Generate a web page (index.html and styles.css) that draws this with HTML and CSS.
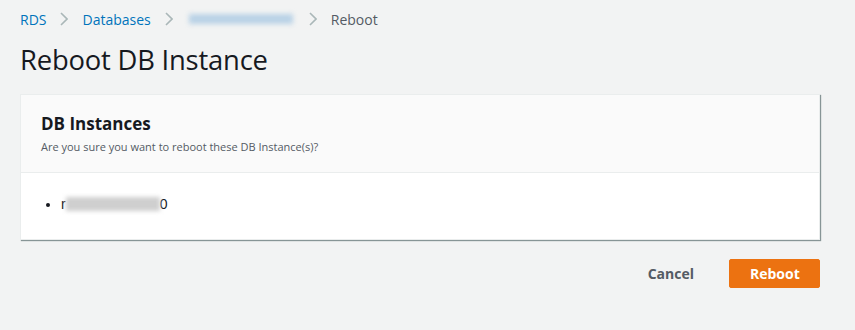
FILE: index.html
```html
<!doctype html>
<html>
<head>
  <meta charset="utf-8">
  <title>Reboot DB Instance</title>
  <link rel="stylesheet" href="styles.css">
</head>
<body>

  <nav class="crumbs">
    <a href="#">RDS</a>
    <span class="sep"><svg width="8" height="14" viewBox="0 0 8 14"><path d="M1 1l6 6-6 6" fill="none" stroke="#aab7b8" stroke-width="1.6"/></svg></span>
    <a href="#">Databases</a>
    <span class="sep"><svg width="8" height="14" viewBox="0 0 8 14"><path d="M1 1l6 6-6 6" fill="none" stroke="#aab7b8" stroke-width="1.6"/></svg></span>
    <a href="#" class="blurred" aria-label="instance"></a>
    <span class="sep"><svg width="8" height="14" viewBox="0 0 8 14"><path d="M1 1l6 6-6 6" fill="none" stroke="#aab7b8" stroke-width="1.6"/></svg></span>
    <span class="current">Reboot</span>
  </nav>

  <h1>Reboot DB Instance</h1>

  <div class="card">
    <div class="card-head">
      <h2>DB Instances</h2>
      <p>Are you sure you want to reboot these DB Instance(s)?</p>
    </div>
    <div class="card-body">
      <ul>
        <li>r<span class="mask"></span>0</li>
      </ul>
    </div>
  </div>

  <div class="actions">
    <button class="btn-link">Cancel</button>
    <button class="btn-primary">Reboot</button>
  </div>

</body>
</html>
```

FILE: styles.css
```css
body {
  margin: 0;
  padding: 0 35px 0 20px;
  background: #f2f3f3;
  font-family: "Open Sans", "Noto Sans", sans-serif;
  color: #16191f;
}

.crumbs {
  display: flex;
  align-items: center;
  height: 38px;
  font-size: 14px;
}

.crumbs a {
  color: #0073bb;
  text-decoration: none;
}

.crumbs .sep {
  display: flex;
  margin: 0 14px;
}

.crumbs .blurred {
  display: block;
  width: 104px;
  height: 10px;
  margin: 0 2px;
  background: #b9d2e6;
  filter: blur(2.5px);
}

.crumbs .current {
  color: #545b64;
}

h1 {
  margin: 1px 0 0;
  font-size: 27.4px;
  font-weight: 400;
  line-height: 42px;
  letter-spacing: -0.2px;
}

.card {
  margin-top: 13px;
  background: #fff;
  border: 1px solid #eaeded;
  box-shadow: 1px 1px 1px 0 #879596;
}

.card-head {
  background: #fafafa;
  border-bottom: 1px solid #eaeded;
  padding: 17px 20px 18px;
}

.card-head h2 {
  margin: 0;
  font-size: 17px;
  font-weight: 700;
  line-height: 24px;
}

.card-head p {
  margin: 3px 0 0;
  font-size: 11px;
  color: #545b64;
  line-height: 15px;
}

.card-body {
  padding: 20px 20px 24px;
}

.card-body ul {
  margin: 0;
  padding-left: 20px;
  font-family: "Liberation Sans", Arial, sans-serif;
  font-size: 14px;
  line-height: 22px;
}

.mask {
  display: inline-block;
  width: 94px;
  height: 14px;
  vertical-align: -2px;
  background: #cfcfcf;
  filter: blur(2px);
}

.actions {
  display: flex;
  justify-content: flex-end;
  align-items: center;
  margin-top: 19px;
  gap: 15px;
}

.actions button {
  font-family: "Open Sans", "Noto Sans", sans-serif;
  font-size: 14px;
  font-weight: 700;
  border-radius: 2px;
  height: 29px;
  padding: 0 20px;
  cursor: pointer;
}

.btn-link {
  background: none;
  border: none;
  color: #545b64;
}

.btn-primary {
  background: #ec7211;
  border: 1px solid #ec7211;
  color: #fff;
  width: 91px;
}
```
